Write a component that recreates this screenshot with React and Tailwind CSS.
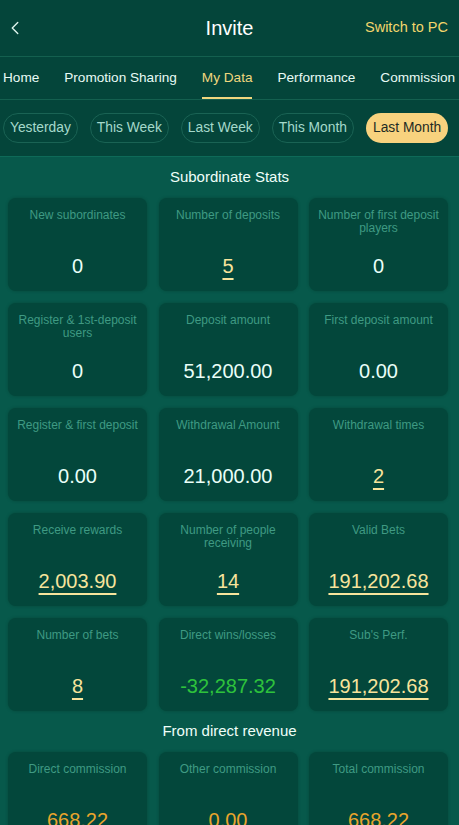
import { ChevronLeft } from 'lucide-react';

const tabs = ['Home', 'Promotion Sharing', 'My Data', 'Performance', 'Commission'];
const ranges = ['Yesterday', 'This Week', 'Last Week', 'This Month', 'Last Month'];

const stats = [
  { label: 'New subordinates', value: '0' },
  { label: 'Number of deposits', value: '5', link: true },
  { label: 'Number of first deposit players', value: '0' },
  { label: 'Register & 1st-deposit users', value: '0' },
  { label: 'Deposit amount', value: '51,200.00' },
  { label: 'First deposit amount', value: '0.00' },
  { label: 'Register & first deposit', value: '0.00' },
  { label: 'Withdrawal Amount', value: '21,000.00' },
  { label: 'Withdrawal times', value: '2', link: true },
  { label: 'Receive rewards', value: '2,003.90', link: true },
  { label: 'Number of people receiving', value: '14', link: true },
  { label: 'Valid Bets', value: '191,202.68', link: true },
  { label: 'Number of bets', value: '8', link: true },
  { label: 'Direct wins/losses', value: '-32,287.32', tone: 'green' },
  { label: "Sub's Perf.", value: '191,202.68', link: true },
];

const revenue = [
  { label: 'Direct commission', value: '668.22', tone: 'orange' },
  { label: 'Other commission', value: '0.00', tone: 'orange' },
  { label: 'Total commission', value: '668.22', tone: 'orange' },
];

function StatCard({ label, value, link, tone }) {
  let valueCls = 'text-[#eafff8]';
  if (link) valueCls = 'text-[#f7e49c] underline decoration-2 underline-offset-[5px]';
  if (tone === 'green') valueCls = 'text-[#2ec23c]';
  if (tone === 'orange') valueCls = 'text-[#e9a52c]';

  return (
    <div className="h-[93px] rounded-lg bg-[#03473b] shadow-[0_0_3px_rgba(0,40,30,0.35)] flex flex-col items-center px-2 pt-[11px]">
      <div className="h-[40px] text-[12px] leading-[12.5px] text-center text-[#3f9a83]">{label}</div>
      <div className={`text-[20px] leading-[24px] mt-[5px] ${valueCls}`}>{value}</div>
    </div>
  );
}

function Section({ title, items }) {
  return (
    <section>
      <h2 className="h-[41px] flex items-center justify-center text-[15px] text-[#effff9]">{title}</h2>
      <div className="grid grid-cols-3 gap-x-[11.5px] gap-y-3 pl-2 pr-[11px]">
        {items.map((s) => (
          <StatCard key={s.label} {...s} />
        ))}
      </div>
    </section>
  );
}

export default function App() {
  return (
    <div className="w-[459px] min-h-[825px] bg-[#07594b] font-['Liberation_Sans',Arial,sans-serif]">
      <header className="bg-[#04453a]">
        <div className="h-[57px] relative flex items-center justify-center border-b border-[#14604f]">
          <ChevronLeft size={22} strokeWidth={1.5} className="absolute left-[4px] text-[#dff5ee]" />
          <h1 className="text-[20px] text-white">Invite</h1>
          <span className="absolute right-[11px] text-[14.5px] text-[#f2d66c]">Switch to PC</span>
        </div>
        <nav className="h-[43px] flex items-stretch gap-[25px] pl-[3px] border-b border-[#14604f] whitespace-nowrap">
          {tabs.map((t) => (
            <span
              key={t}
              className={
                t === 'My Data'
                  ? 'flex items-center text-[13.6px] text-[#f0d77e] border-b-2 border-[#f0d77e] pt-[2px]'
                  : 'flex items-center text-[13.6px] text-[#e8fbf5]'
              }
            >
              {t}
            </span>
          ))}
        </nav>
        <div className="h-[57px] flex items-center gap-3 pl-[3px] border-b border-[#0e6a58]">
          {ranges.map((r) =>
            r === 'Last Month' ? (
              <span key={r} className="h-[30px] px-[7px] flex items-center rounded-full bg-[#f8d27e] text-[13.8px] text-[#1e2b24]">
                {r}
              </span>
            ) : (
              <span key={r} className="h-[30px] px-[6px] flex items-center rounded-full border border-[#1a6354] text-[13.8px] text-[#a4d9cb]">
                {r}
              </span>
            )
          )}
        </div>
      </header>
      <Section title="Subordinate Stats" items={stats} />
      <Section title="From direct revenue" items={revenue} />
    </div>
  );
}
